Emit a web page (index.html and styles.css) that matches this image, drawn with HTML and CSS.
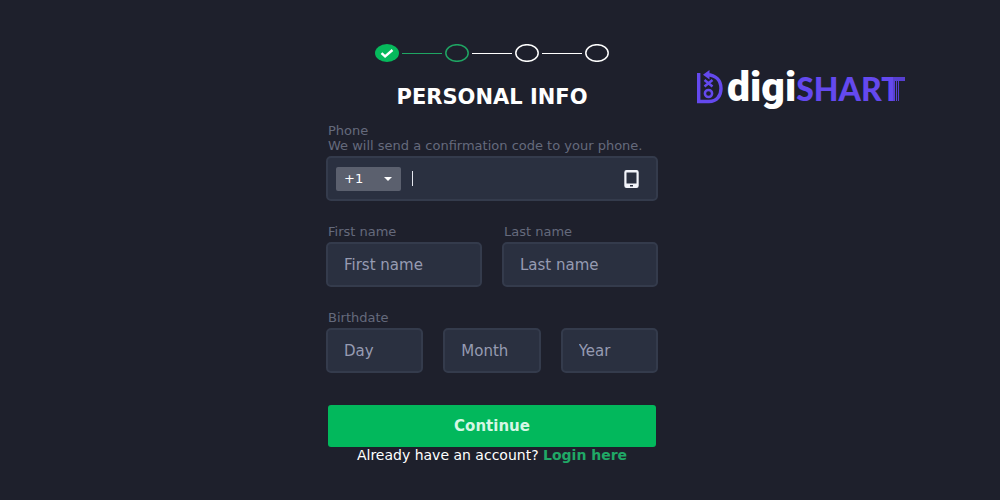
FILE: index.html
```html
<!DOCTYPE html>
<html lang="en">
<head>
    <meta charset="UTF-8">
    <meta name="viewport" content="width=device-width, initial-scale=1.0">
    <title>Personal Info</title>
    <link rel="stylesheet" href="styles.css">
</head>
<body>
    <div class="page">
        <main class="signup">
            <!-- Progress -->
            <div class="steps">
                <svg class="step done" viewBox="0 0 24 18">
                    <ellipse cx="12" cy="9" rx="12" ry="9"/>
                    <path d="M6.5 9.2l3.6 3.2 7.4-6.4"/>
                </svg>
                <span class="line active"></span>
                <svg class="step active" viewBox="0 0 24 18"><ellipse cx="12" cy="9" rx="11.2" ry="8.3"/></svg>
                <span class="line"></span>
                <svg class="step" viewBox="0 0 24 18"><ellipse cx="12" cy="9" rx="11.2" ry="8.3"/></svg>
                <span class="line"></span>
                <svg class="step" viewBox="0 0 24 18"><ellipse cx="12" cy="9" rx="11.2" ry="8.3"/></svg>
            </div>

            <h1>PERSONAL INFO</h1>

            <form>
                <div class="field">
                    <label for="phone">Phone<br>We will send a confirmation code to your phone.</label>
                    <div class="box phone-box">
                        <div class="code">
                            <select aria-label="Country code">
                                <option>+1</option>
                            </select>
                            <svg class="arrow" viewBox="0 0 8 4"><path d="M0 0h8l-4 4z"/></svg>
                        </div>
                        <span class="caret"></span>
                        <input type="tel" id="phone">
                        <svg class="phone-icon" viewBox="0 0 15 18">
                            <path fill-rule="evenodd" d="M2.5 0h10a2.2 2.2 0 0 1 2.2 2.2v13.6a2.2 2.2 0 0 1-2.2 2.2h-10a2.2 2.2 0 0 1-2.2-2.2V2.2A2.2 2.2 0 0 1 2.5 0zM2.5 2.5v11h10v-11zM6 15v1.5h3V15z"/>
                        </svg>
                    </div>
                </div>

                <div class="row">
                    <div class="field">
                        <label for="first">First name</label>
                        <input class="box" type="text" id="first" placeholder="First name">
                    </div>
                    <div class="field">
                        <label for="last">Last name</label>
                        <input class="box" type="text" id="last" placeholder="Last name">
                    </div>
                </div>

                <div class="field">
                    <label for="day">Birthdate</label>
                    <div class="row">
                        <input class="box" type="text" id="day" placeholder="Day">
                        <input class="box" type="text" aria-label="Month" placeholder="Month">
                        <input class="box" type="text" aria-label="Year" placeholder="Year">
                    </div>
                </div>

                <button class="btn" type="submit">Continue</button>
            </form>

            <p class="login">Already have an account? <a href="#">Login here</a></p>
        </main>

        <!-- Logo -->
        <div class="logo">
            <svg class="logo-mark" viewBox="0 0 26 34">
                <path class="thick" d="M1.7 3v28.5H12C20 31.5 24 25.5 24 18.5 24 10.5 19 5 10 4.7"/>
                <path class="fill" d="M6 4.7L12.5 0v9.5z"/>
                <path d="M7.5 10l8 6.5M15.5 10l-8 6.5"/>
                <circle cx="11.5" cy="23.5" r="3.6"/>
            </svg>
            <span class="digi">digi</span>
            <span class="shart">SHART</span>
            <svg class="stripes" viewBox="0 0 12 24">
                <path d="M0 0h12v4H0zM0 4h2v20H0zM3 4h1v20H3zM5 4h1v20H5z"/>
            </svg>
        </div>
    </div>
</body>
</html>
```

FILE: styles.css
```css
* {
    box-sizing: border-box;
}
body {
    margin: 0;
    min-height: 100vh;
    background-color: #1e202c;
    color: #fff;
    font-family: "DejaVu Sans", Verdana, sans-serif;
    font-size: 15px;
}
.page {
    display: grid;
    grid-template-columns: 1fr minmax(0, 332px) 1fr;
    padding: 44px 16px 0 0;
}
.signup {
    grid-column: 2;
}
.steps {
    display: flex;
    justify-content: center;
    align-items: center;
}
.step {
    width: 24px;
    height: 18px;
    fill: none;
    stroke: #fff;
    stroke-width: 1.5;
}
.step.active {
    stroke: #1fa563;
}
.step.done ellipse {
    fill: #06b95c;
    stroke: none;
}
.step.done path {
    stroke-width: 2.4;
}
.line {
    width: 40px;
    height: 1px;
    margin: 0 3px;
    background-color: #fff;
}
.line.active {
    background-color: #1fa563;
}
h1 {
    margin: 21px 0 12px;
    font-size: 21px;
    line-height: 28px;
    font-weight: bold;
    text-align: center;
}
form {
    display: flex;
    flex-direction: column;
    gap: 23px;
}
.field {
    flex: 1;
    min-width: 0;
}
label {
    display: block;
    padding: 0 2px 3px;
    font-size: 13px;
    line-height: 15px;
    color: #656a7c;
}
.row {
    display: flex;
    gap: 20px;
}
.box {
    width: 100%;
    min-width: 0;
    height: 45px;
    padding: 0 16px;
    border: 2px solid #343b4c;
    border-radius: 5px;
    background-color: #2a3040;
    color: #fff;
    font: inherit;
}
.box::placeholder {
    color: #969bb2;
}
.phone-box {
    display: flex;
    align-items: center;
    padding: 0 17px 0 8px;
}
.phone-box input {
    flex: 1;
    min-width: 0;
    border: none;
    outline: none;
    background: none;
    color: #fff;
    font: inherit;
}
.code {
    display: grid;
    align-items: center;
    width: 65px;
    margin-right: 11px;
}
.code select {
    grid-area: 1 / 1;
    appearance: none;
    height: 24px;
    padding: 0 8px;
    border: none;
    border-radius: 2px;
    background-color: #5b606e;
    color: #fff;
    font: inherit;
    font-size: 13px;
}
.arrow {
    grid-area: 1 / 1;
    justify-self: end;
    width: 8px;
    height: 4px;
    margin-right: 9px;
    fill: #fff;
    pointer-events: none;
}
.caret {
    width: 1px;
    height: 15px;
    background-color: #e4e6ee;
}
.phone-icon {
    width: 15px;
    height: 18px;
    fill: #f2f4fa;
}
.btn {
    height: 42px;
    margin: 9px 2px 0;
    border: none;
    border-radius: 3px;
    background-color: #02b85c;
    color: #d5f7e4;
    font: inherit;
    font-weight: bold;
    cursor: pointer;
}
.login {
    margin: 0;
    font-size: 14px;
    line-height: 16px;
    text-align: center;
}
.login a {
    color: #20a866;
    font-weight: bold;
    text-decoration: none;
}
.logo {
    display: flex;
    align-items: flex-start;
    height: 44px;
    margin: 23px 0 0 39px;
}
.logo-mark {
    width: 26px;
    height: 34px;
    margin: 3px 4px 0 0;
    fill: none;
    stroke: #6449ee;
    stroke-width: 2.5;
}
.logo-mark .thick {
    stroke-width: 3.4;
}
.logo-mark .fill {
    fill: #6449ee;
    stroke: none;
}
.digi {
    font: 900 41px/40px Roboto, Arial, sans-serif;
}
.shart {
    color: #6449ee;
    font: 900 32px/44px Lato, sans-serif;
}
.stripes {
    width: 12px;
    height: 24px;
    margin: 10px 0 0 -8px;
    fill: #573fd0;
}
```
